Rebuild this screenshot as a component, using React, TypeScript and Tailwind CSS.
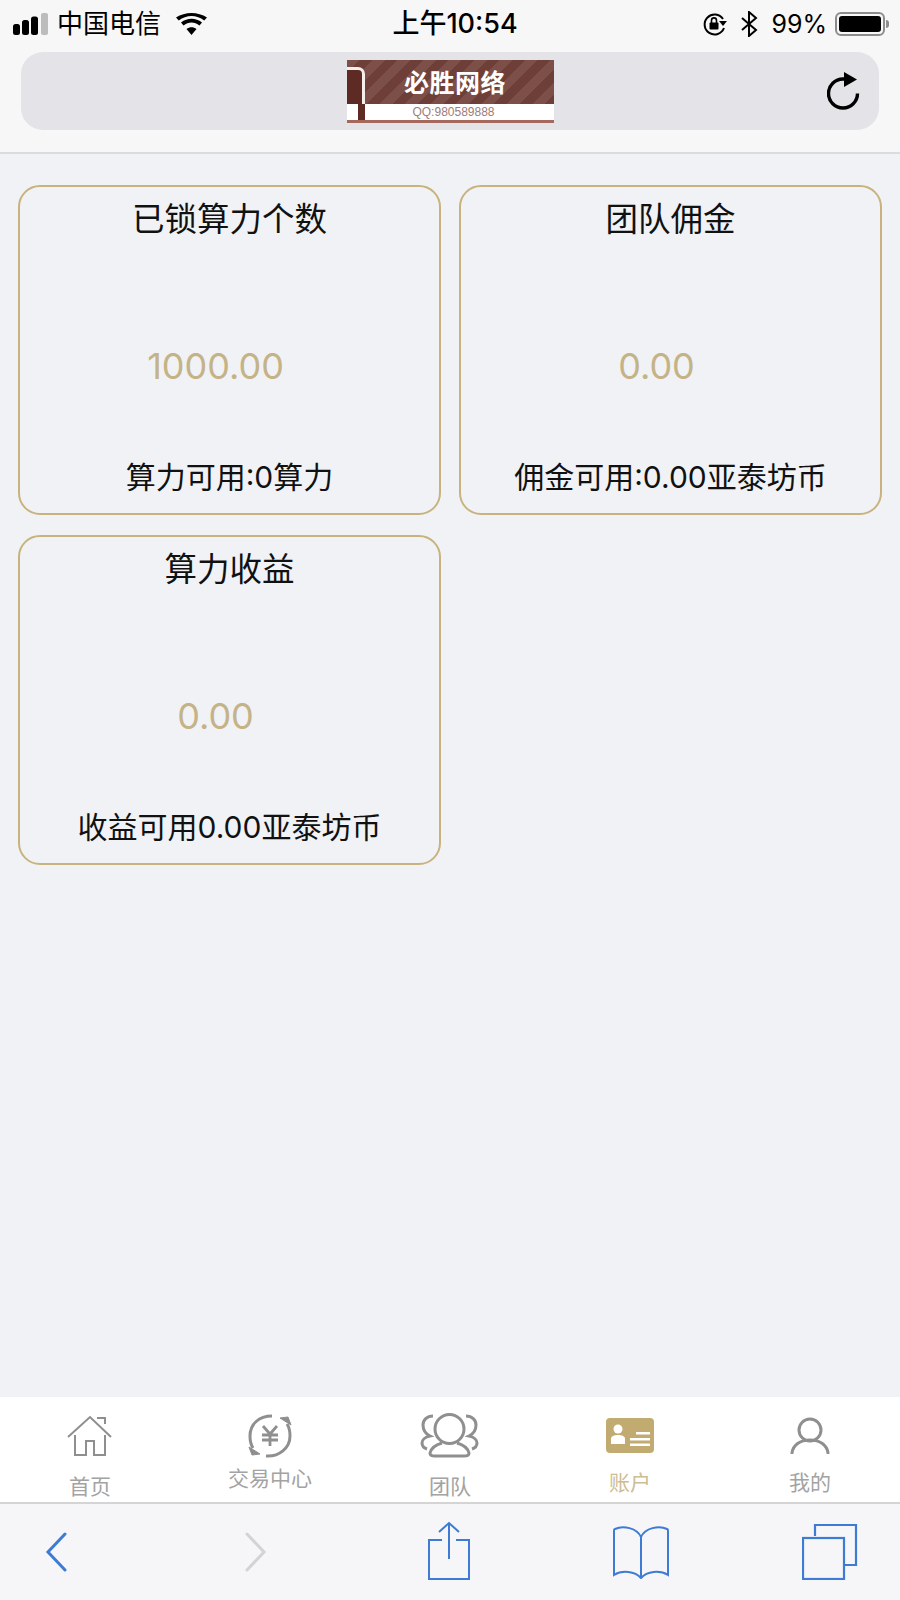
import React from 'react'

// Stat cards on the account page
const cards = [
  { title: '已锁算力个数', value: '1000.00', note: '算力可用:0算力' },
  { title: '团队佣金', value: '0.00', note: '佣金可用:0.00亚泰坊币' },
  { title: '算力收益', value: '0.00', note: '收益可用0.00亚泰坊币' },
]

function HomeIcon() {
  return (
    <svg width="46" height="42" viewBox="0 0 46 42" fill="none" stroke="#8f8f8f" strokeWidth="2">
      <path d="M1 22 23 2l21 20" />
      <path d="M30 3h8v6" />
      <path d="M8 20v20h11V26h8v14h11V20" />
    </svg>
  )
}

function ExchangeIcon() {
  return (
    <svg width="46" height="44" viewBox="0 0 46 44" fill="none" stroke="#8f8f8f" strokeWidth="3">
      <path d="M25 2C12 2 3 10 3 22c0 5 1 9 3 12" />
      <path d="M2 33l3 8 8-1z" fill="#8f8f8f" strokeWidth="1" />
      <path d="M19 42c13 1 24-8 24-20 0-5-1-9-3-12" />
      <path d="M44 11l-3-8-8 1z" fill="#8f8f8f" strokeWidth="1" />
      <path d="M16 12l7 8 7-8M15 21h16M15 26h16M23 20v12" strokeWidth="2.800" />
    </svg>
  )
}

function TeamIcon() {
  return (
    <svg width="60" height="46" viewBox="0 0 60 46" fill="none" stroke="#8f8f8f" strokeWidth="3">
      <circle cx="29.500" cy="17" r="14.500" />
      <path d="M22 31C15 33 11 37 10 41c0 2 2 3 5 3h29c3 0 5-1 5-3-1-4-5-8-12-10" />
      <path d="M13 4C7 4 3 8 3 13c0 5 3 9 7 11-5 1-8 4-8 7 0 3 2 5 5 6" />
      <path d="M46 4c6 0 10 4 10 9 0 5-3 9-7 11 5 1 8 4 8 7 0 3-2 5-5 6" />
    </svg>
  )
}

function AccountIcon() {
  return (
    <svg width="48" height="35" viewBox="0 0 48 35">
      <rect width="48" height="35" rx="4" fill="#c2ab70" />
      <circle cx="12" cy="11" r="4.500" fill="#fff" />
      <path d="M5 26v-5c0-3 3-4 7-4s7 1 7 4v5z" fill="#fff" />
      <path d="M30 14h14v2.500H30zM24 20h20v2.500H24zM24 25.500h20V28H24z" fill="#fff" />
    </svg>
  )
}

function MeIcon() {
  return (
    <svg width="40" height="37" viewBox="0 0 40 37" fill="none" stroke="#8f8f8f" strokeWidth="3">
      <circle cx="20" cy="13" r="11" />
      <path d="M2 36c1-8 8-13 18-13s17 5 18 13" strokeLinecap="round" />
    </svg>
  )
}

const tabs = [
  { label: '首页', icon: <HomeIcon />, box: 'pt-[18px]', text: 'mt-[18px] text-[#a3a3a3]' },
  { label: '交易中心', icon: <ExchangeIcon />, box: 'pt-[17px]', text: 'mt-[9px] text-[#a3a3a3]' },
  { label: '团队', icon: <TeamIcon />, box: 'pt-[15px]', text: 'mt-[17px] text-[#a3a3a3]' },
  { label: '账户', icon: <AccountIcon />, box: 'pt-[21px]', text: 'mt-[18px] text-[#cdbd94]' },
  { label: '我的', icon: <MeIcon />, box: 'pt-[20px]', text: 'mt-[17px] text-[#a3a3a3]' },
]

function StatusBar() {
  return (
    <div className="flex h-[52px] items-center pb-[4px] pl-[13px] pr-[11px] text-[26px] leading-[32px] text-black">
      <svg className="shrink-0" width="35" height="22" viewBox="0 0 35 22">
        <rect x="0" y="11" width="7" height="11" rx="2.500" fill="#000" />
        <rect x="9" y="7" width="7" height="15" rx="2.500" fill="#000" />
        <rect x="18" y="3.500" width="7" height="18.500" rx="2.500" fill="#000" />
        <rect x="28" y="0" width="7" height="22" rx="2" fill="#bcbcbc" />
      </svg>
      <span className="ml-[9px] whitespace-nowrap">中国电信</span>
      <svg className="ml-[15px] shrink-0" width="31" height="23" viewBox="0 0 31 23">
        <path d="M15.500 22 10.500 16c3-2.500 7-2.500 10 0z" fill="#000" />
        <path d="M7.500 12.500c5-4 11-4 16 0l2.500-3c-6.500-5-14.500-5-21 0z" fill="#000" />
        <path d="M2.800 7.500c7.500-6 18-6 25.400 0L31 4.500C22-1.500 9-1.500 0 4.500z" fill="#000" />
      </svg>
      <div className="ml-[185px] w-[126px] whitespace-nowrap text-center text-[27px] font-medium">上午10:54</div>
      <div className="ml-auto flex items-center">
        <svg width="26" height="26" viewBox="0 0 26 26" fill="none" stroke="#000" strokeWidth="2">
          <path d="M21 8A10 10 0 1 0 22 17" />
          <path d="M17 10h8l-4 5z" fill="#000" stroke="none" />
          <rect x="7.500" y="11.500" width="9" height="7" rx="1" fill="#000" stroke="none" />
          <path d="M9.500 12V9.500c0-3.500 5-3.500 5 0V12" strokeWidth="1.600" />
        </svg>
        <svg className="ml-[13px]" width="17" height="26" viewBox="0 0 17 26" fill="none" stroke="#000" strokeWidth="2">
          <path d="M1 7 15 19l-7 6V1l7 6L1 19" />
        </svg>
        <span className="ml-[13px] text-[25px]">99%</span>
        <div className="ml-[8px] flex items-center">
          <div className="h-[24px] w-[50px] rounded-[6px] border-2 border-[#8c8c8c] p-[2px]">
            <div className="h-full w-full rounded-[3px] bg-black" />
          </div>
          <div className="ml-[1px] h-[8px] w-[3px] rounded-r-full bg-[#8c8c8c]" />
        </div>
      </div>
    </div>
  )
}

function Logo() {
  return (
    <div className="flex h-[63px] w-[207px] flex-col font-['Noto_Sans_CJK_SC',sans-serif]">
      <div className="relative flex h-[44px] items-center justify-center bg-[#73443d] bg-[repeating-linear-gradient(135deg,#7c5048_0,#7c5048_9px,#6d3f38_9px,#6d3f38_18px)] pl-[10px] text-[25px] font-bold leading-none tracking-[0.5px] text-white">
        必胜网络
        <div className="absolute left-0 top-[7px] h-[37px] w-[18px] rounded-tr-[7px] border-r-[3px] border-t-[3px] border-[#f6eeea] bg-[#5e2b24]" />
      </div>
      <div className="relative flex h-[16px] items-center justify-center bg-white pl-[7px] font-['Liberation_Sans',sans-serif] text-[12px] leading-none text-[#9b7d7a]">
        QQ:980589888
        <div className="absolute left-[11px] top-0 h-[16px] w-[7px] bg-[#5e2b24]" />
      </div>
      <div className="h-[3px] bg-[#a4695c]" />
    </div>
  )
}

function Header() {
  return (
    <div className="border-b-2 border-[#dcdcdc] bg-[#f7f7f7] pb-[22px]">
      <StatusBar />
      <div className="relative mx-[21px] flex h-[78px] items-center justify-center rounded-[22px] bg-[#e3e3e8]">
        <Logo />
        <svg className="absolute right-[18px] top-[20px]" width="34" height="38" viewBox="0 0 34 38" fill="none" stroke="#000" strokeWidth="3.400">
          <path d="M30.500 21.500A14.500 14.500 0 1 1 16 7h4" />
          <path d="M17 0l13 7.500L17 15z" fill="#000" stroke="none" />
        </svg>
      </div>
    </div>
  )
}

function StatCard({ title, value, note }: { title: string; value: string; note: string }) {
  return (
    <div className="flex h-[330px] flex-col items-center rounded-[22px] border-2 border-[#c8b37f] pt-[11px]">
      <div className="text-[32.500px] leading-[44px] text-[#111]">{title}</div>
      <div className="mt-[102px] w-full pr-[28px] text-center font-['Inter',sans-serif] text-[36px] font-normal leading-[44px] text-[#c5b388]">
        {value}
      </div>
      <div className="mt-[68px] whitespace-nowrap text-[30px] leading-[42px] text-[#111]">{note}</div>
    </div>
  )
}

function TabBar() {
  return (
    <div className="grid h-[107px] grid-cols-5 border-b-2 border-[#d4d4d4] bg-white">
      {tabs.map(tab => (
        <div key={tab.label} className={`flex flex-col items-center ${tab.box}`}>
          {tab.icon}
          <div className={`whitespace-nowrap text-[21px] leading-[24px] ${tab.text}`}>{tab.label}</div>
        </div>
      ))}
    </div>
  )
}

function BrowserToolbar() {
  return (
    <div className="flex h-[96px] items-center bg-[#f6f6f8] pl-[45px]">
      <svg width="22" height="40" viewBox="0 0 22 40" fill="none" stroke="#3d7bd4" strokeWidth="3" strokeLinecap="round">
        <path d="M20 2 3 20l17 18" />
      </svg>
      <svg className="ml-[178px]" width="22" height="40" viewBox="0 0 22 40" fill="none" stroke="#d3d3d3" strokeWidth="3" strokeLinecap="round">
        <path d="M2 2l17 18L2 38" />
      </svg>
      <svg className="mb-[2px] ml-[161px]" width="42" height="60" viewBox="0 0 42 60" fill="none" stroke="#3d7bd4" strokeWidth="2">
        <path d="M14 19H1v39h40V19H28" />
        <path d="M21 38V2M11 11l10-9 10 9" />
      </svg>
      <svg className="ml-[143px]" width="56" height="54" viewBox="0 0 56 54" fill="none" stroke="#3d7bd4" strokeWidth="2">
        <path d="M28 12C24 3 10 0 2 4c-1 0-1 1-1 2v44c8-5 21-4 27 3 6-7 19-8 27-3V6c0-1 0-2-1-2-8-4-22-1-26 8z" />
        <path d="M28 12v41" />
      </svg>
      <svg className="ml-[133px]" width="56" height="56" viewBox="0 0 56 56" fill="none" stroke="#3d7bd4" strokeWidth="2.200">
        <path d="M13 12V1h41v40H42" />
        <rect x="1" y="14" width="41" height="41" />
      </svg>
    </div>
  )
}

export default function App() {
  return (
    <div className="flex h-[1600px] w-[900px] flex-col overflow-hidden bg-[#f0f2f6] font-['Inter','Noto_Sans_CJK_SC',sans-serif]">
      <Header />
      <div className="flex-1 px-[18px] pt-[31px]">
        <div className="grid grid-cols-2 gap-x-[18px] gap-y-[20px]">
          {cards.map(card => (
            <StatCard key={card.title} {...card} />
          ))}
        </div>
      </div>
      <TabBar />
      <BrowserToolbar />
    </div>
  )
}
